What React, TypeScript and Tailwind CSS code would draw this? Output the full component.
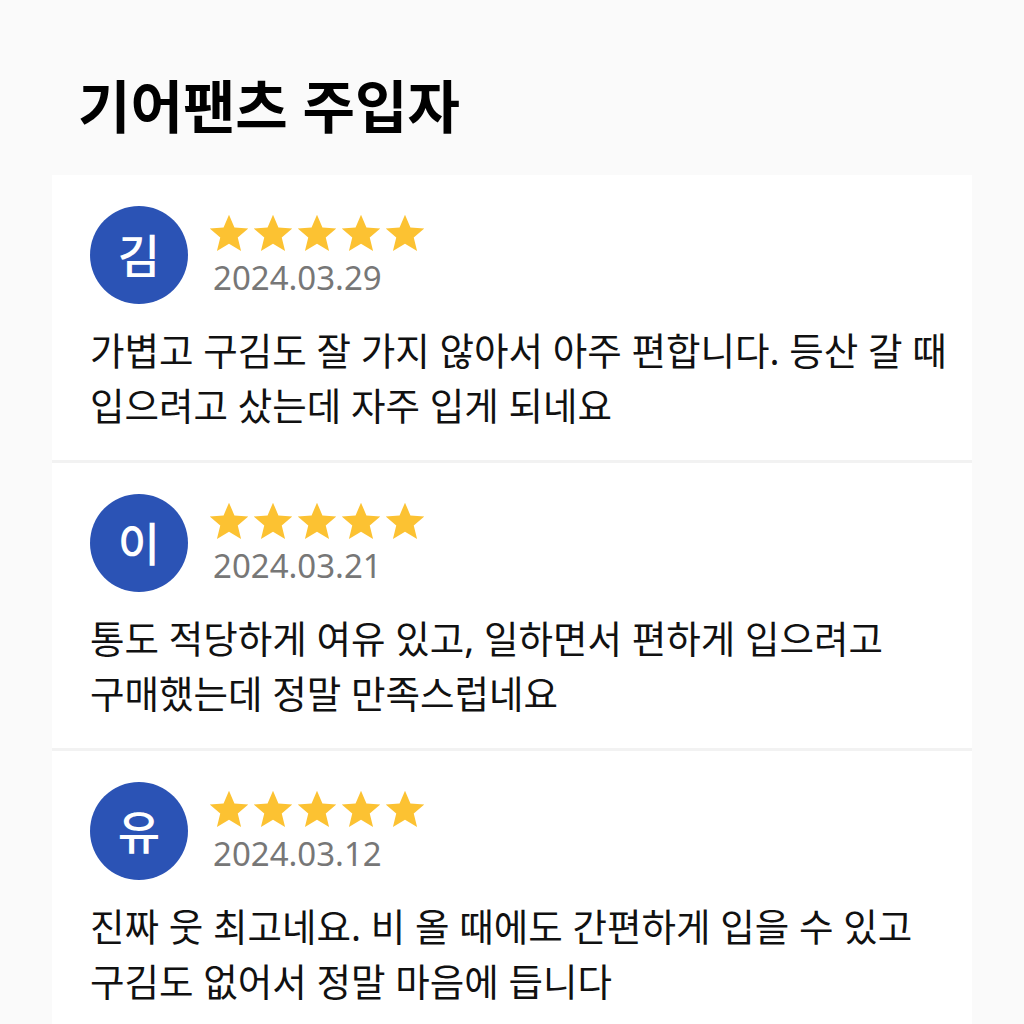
import React from 'react';

type Review = {
  id: number;
  initial: string;
  date: string;
  lines: string[];
};

const reviews: Review[] = [
  {
    id: 1,
    initial: '김',
    date: '2024.03.29',
    lines: ['가볍고 구김도 잘 가지 않아서 아주 편합니다. 등산 갈 때', '입으려고 샀는데 자주 입게 되네요'],
  },
  {
    id: 2,
    initial: '이',
    date: '2024.03.21',
    lines: ['통도 적당하게 여유 있고, 일하면서 편하게 입으려고', '구매했는데 정말 만족스럽네요'],
  },
  {
    id: 3,
    initial: '유',
    date: '2024.03.12',
    lines: ['진짜 웃 최고네요. 비 올 때에도 간편하게 입을 수 있고', '구김도 없어서 정말 마음에 듭니다'],
  },
];

const Star: React.FC = () => (
  <svg viewBox="0 0 24 24" className="h-[42px] w-[42px]" fill="#fcc232">
    <path d="M12 1.5l3.1 7.3 7.9.6-6 5.2 1.9 7.7L12 18.2l-6.9 4.1 1.9-7.7-6-5.2 7.9-.6z" />
  </svg>
);

const ReviewCard: React.FC<{ review: Review }> = ({ review }) => (
  <div className="bg-white pl-[38px] pr-[20px] pt-[31px] pb-[27px]">
    <div className="flex items-center gap-[22px]">
      <div className="flex h-[98px] w-[98px] items-center justify-center rounded-full bg-[#2b53b5] text-[46px] font-medium text-white">
        {review.initial}
      </div>
      <div className="flex flex-col">
        <div className="flex gap-[2px] -ml-[2px]">
          {[0, 1, 2, 3, 4].map((i) => (
            <Star key={i} />
          ))}
        </div>
        <div className="ml-[3px] mt-[4px] text-[33px] leading-[40px] text-[#777777]">{review.date}</div>
      </div>
    </div>
    <p className="mt-[19px] whitespace-nowrap text-[37.5px] leading-[55px] text-[#111111]">
      {review.lines[0]}
      <br />
      {review.lines[1]}
    </p>
  </div>
);

export default function App() {
  return (
    <div
      className="min-h-[1024px] bg-[#fafafa] px-[52px] pt-[71px]"
      style={{ fontFamily: '"Noto Sans", "Noto Sans CJK KR", sans-serif' }}
    >
      <h1 className="pl-[26px] text-[57px] font-bold leading-[70px] text-black">기어팬츠 주입자</h1>
      <div className="mt-[34px] flex flex-col gap-[3px] bg-[#f2f2f2]">
        {reviews.map((r) => (
          <ReviewCard key={r.id} review={r} />
        ))}
      </div>
    </div>
  );
}
